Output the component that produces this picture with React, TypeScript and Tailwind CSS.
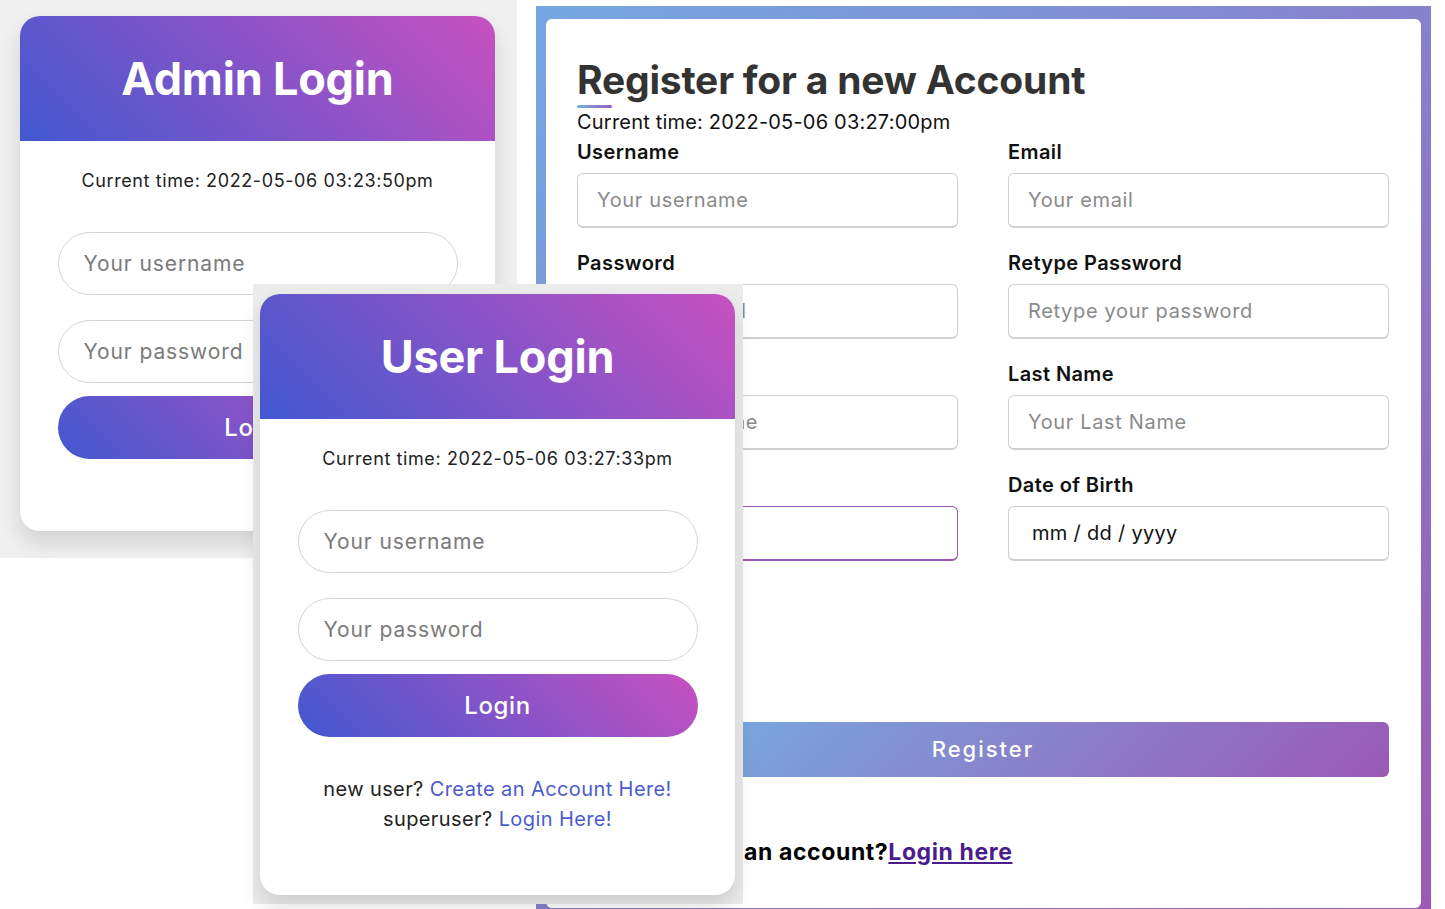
import React from 'react';

type LoginCardProps = {
  title: string;
  time: string;
  links?: boolean;
};

function LoginCard({ title, time, links }: LoginCardProps) {
  return (
    <div className="w-[475px] h-full bg-white rounded-[20px] overflow-hidden shadow-[0_12px_22px_rgba(0,0,0,0.13)] flex flex-col">
      <div className="h-[125px] shrink-0 flex items-center justify-center bg-[linear-gradient(-135deg,#c850c0,#4158d0)]">
        <h1 className="text-white text-[45px] font-bold tracking-[-0.2px]">{title}</h1>
      </div>
      <p className="mt-[26px] text-center text-[18px] leading-[28px] tracking-[0.6px] text-[#222]">Current time: {time}</p>
      <div className="mt-[37px] flex flex-col items-center">
        <input
          className="w-[400px] h-[63px] rounded-full border border-[#d4d4d4] px-[25px] text-[21px] tracking-[0.9px] outline-none placeholder:text-[#7a7a7a]"
          placeholder="Your username"
        />
        <input
          type="password"
          className="mt-[25px] w-[400px] h-[63px] rounded-full border border-[#d4d4d4] px-[25px] text-[21px] tracking-[0.9px] outline-none placeholder:text-[#7a7a7a]"
          placeholder="Your password"
        />
        <button className="mt-[13px] w-[400px] h-[63px] rounded-full text-white text-[24px] font-medium tracking-[0.6px] bg-[linear-gradient(-135deg,#c850c0,#4158d0)]">
          Login
        </button>
      </div>
      {links && (
        <div className="mt-[37px] text-center text-[20px] leading-[30px] tracking-[0.4px] text-[#222]">
          <p>
            new user? <a className="text-[#4a5ccc]">Create an Account Here!</a>
          </p>
          <p>
            superuser? <a className="text-[#4a5ccc]">Login Here!</a>
          </p>
        </div>
      )}
    </div>
  );
}

type FieldProps = {
  label: string;
  placeholder?: string;
  value?: string;
  focused?: boolean;
  caret?: boolean;
};

function Field({ label, placeholder, value, focused, caret }: FieldProps) {
  return (
    <div className="mb-[20px]">
      <label className="block text-[20px] leading-[30px] font-semibold tracking-[0.4px] text-[#111]">{label}</label>
      <div className="relative mt-[6px]">
        <input
          readOnly={!!value}
          defaultValue={value}
          placeholder={placeholder}
          className={`w-full h-[55px] rounded-[6px] border border-b-2 px-[19px] text-[20px] outline-none text-[#111] placeholder:text-[#8a8a8a] ${
            focused ? 'border-[#9b59b6]' : 'border-[#cfcfcf]'
          } ${value ? 'pl-[23px] tracking-[0.3px]' : 'tracking-[0.65px]'}`}
        />
        {caret && <div className="absolute left-[164px] top-[21px] w-[2px] h-[14px] bg-[#a9c9ee]" />}
      </div>
    </div>
  );
}

export default function App() {
  return (
    <div className="relative w-[1445px] h-[909px] bg-white overflow-hidden font-['Inter',sans-serif]">
      {/* admin login screenshot */}
      <div className="absolute left-0 top-0 w-[517px] h-[558px] bg-[#f0f0f0] pl-[20px] pt-[16px] pb-[27px]">
        <LoginCard title="Admin Login" time="2022-05-06 03:23:50pm" />
      </div>

      {/* register screenshot */}
      <div className="absolute left-[536px] top-[6px] w-[895px] h-[910px] bg-[linear-gradient(135deg,#74a8e2,#9b59b6)] pl-[10px] pr-[10px] pt-[13px] pb-[8px]">
        <div className="h-[889px] bg-white rounded-[6px] pl-[31px] pr-[32px] pt-[36px]">
          <h2 className="text-[39px] leading-[50px] font-bold tracking-[-0.2px] text-[#333]">Register for a new Account</h2>
          <div className="h-[3px] w-[35px] rounded-full bg-[linear-gradient(135deg,#71b7e6,#9b59b6)]" />
          <p className="text-[20px] leading-[28px] tracking-[0.2px] text-[#111]">Current time: 2022-05-06 03:27:00pm</p>
          <div className="mt-[1px] grid grid-cols-2 gap-x-[50px]">
            <Field label="Username" placeholder="Your username" />
            <Field label="Email" placeholder="Your email" />
            <Field label="Password" placeholder="Your password" caret />
            <Field label="Retype Password" placeholder="Retype your password" />
            <Field label="First Name" placeholder="Your First Name" />
            <Field label="Last Name" placeholder="Your Last Name" />
            <Field label="Phone Number" focused />
            <Field label="Date of Birth" value="mm / dd / yyyy" />
          </div>
          <button className="mt-[141px] w-full h-[55px] rounded-[6px] text-white text-[22px] font-medium tracking-[2px] bg-[linear-gradient(135deg,#71b7e6,#9b59b6)]">
            Register
          </button>
          <p className="mt-[60px] pl-[6px] text-[23px] leading-[30px] font-bold tracking-[0.6px] text-black">
            Already have an account?
            <a className="text-[#4b1d8c] underline">Login here</a>
          </p>
        </div>
      </div>

      {/* user login screenshot */}
      <div className="absolute left-[253px] top-[284px] w-[490px] h-[620px] bg-[#ececec] pl-[7px] pt-[10px] pb-[9px]">
        <LoginCard title="User Login" time="2022-05-06 03:27:33pm" links />
      </div>
    </div>
  );
}
